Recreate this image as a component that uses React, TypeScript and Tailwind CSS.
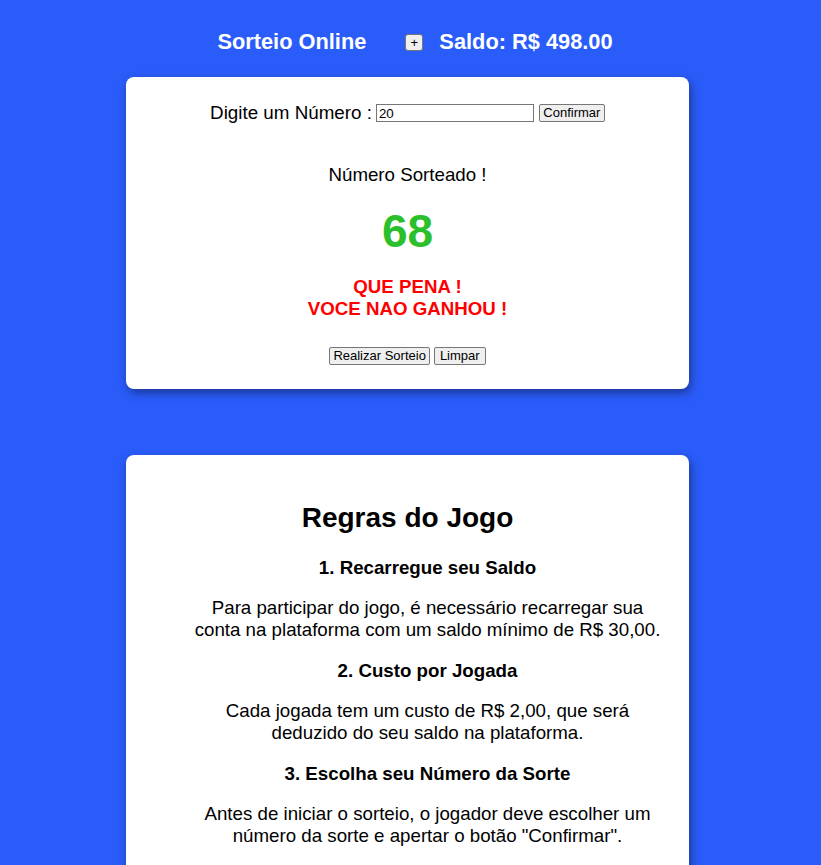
import React from "react";

const btn =
  "h-[18px] px-[3px] bg-[#efefef] border border-[#767676] rounded-[2px] text-[13px] leading-[14px] text-black whitespace-nowrap";

export default function App() {
  return (
    <div
      className="min-h-screen bg-[#2a5cfa] text-black overflow-hidden"
      style={{ fontFamily: '"Liberation Sans", Arial, sans-serif' }}
    >
      <header className="flex items-center justify-center pl-[9px] pt-[31px] h-[53px]">
        <h1 className="text-[21.8px] font-bold leading-[22px] text-white mr-[39px]">
          Sorteio Online
        </h1>
        <button className="w-[18px] h-[17px] bg-[#efefef] border border-[#767676] rounded-[3px] text-[13px] leading-[13px] flex items-center justify-center mr-[16px]">
          +
        </button>
        <span className="text-[21.8px] font-bold leading-[22px] text-white">
          Saldo: R$ 498.00
        </span>
      </header>

      <main className="flex flex-col ml-[126px] w-[563px] mt-[24px]">
        <section className="bg-white rounded-[8px] shadow-[2px_4px_10px_rgba(0,0,0,0.4)] pt-[25px] pb-[24px] flex flex-col items-center">
          <div className="flex items-center h-[22px]">
            <label className="text-[18.8px] leading-[22px]">Digite um Número :</label>
            <input
              defaultValue="20"
              className="ml-[4px] w-[158px] h-[18px] border border-[#767676] px-[2px] text-[13.33px] leading-[14px] outline-none"
            />
            <button className={btn + " ml-[5px] w-[66px]"}>Confirmar</button>
          </div>
          <p className="mt-[40px] text-[18.72px] leading-[22px]">Número Sorteado !</p>
          <p className="mt-[18px] text-[46px] font-bold leading-[54px] text-[#2bbf2b]">68</p>
          <div className="mt-[18px] text-[18.72px] font-bold leading-[22px] text-[#ff0000] text-center">
            <p>QUE PENA !</p>
            <p>VOCE NAO GANHOU !</p>
          </div>
          <div className="mt-[27px] flex gap-[4px]">
            <button className={btn + " px-[2px]"}>Realizar Sorteio</button>
            <button className={btn + " px-[5px]"}>Limpar</button>
          </div>
        </section>

        <section className="mt-[66px] bg-white rounded-[8px] shadow-[2px_4px_10px_rgba(0,0,0,0.4)] pt-[47px] pb-[46px] px-[28px] text-center">
          <h2 className="text-[28px] font-bold leading-[32px]">Regras do Jogo</h2>
          <ol className="pl-[40px]">
            <li>
              <h3 className="mt-[23px] text-[18.72px] font-bold leading-[22px]">1. Recarregue seu Saldo</h3>
              <p className="mt-[18px] text-[18.72px] leading-[22px]">
                Para participar do jogo, é necessário recarregar sua conta na plataforma com um saldo mínimo de R$ 30,00.
              </p>
            </li>
            <li>
              <h3 className="mt-[19px] text-[18.72px] font-bold leading-[22px]">2. Custo por Jogada</h3>
              <p className="mt-[18px] text-[18.72px] leading-[22px]">
                Cada jogada tem um custo de R$ 2,00, que será deduzido do seu saldo na plataforma.
              </p>
            </li>
            <li>
              <h3 className="mt-[19px] text-[18.72px] font-bold leading-[22px]">3. Escolha seu Número da Sorte</h3>
              <p className="mt-[18px] text-[18.72px] leading-[22px]">
                Antes de iniciar o sorteio, o jogador deve escolher um número da sorte e apertar o botão "Confirmar".
              </p>
            </li>
          </ol>
        </section>
      </main>
    </div>
  );
}
